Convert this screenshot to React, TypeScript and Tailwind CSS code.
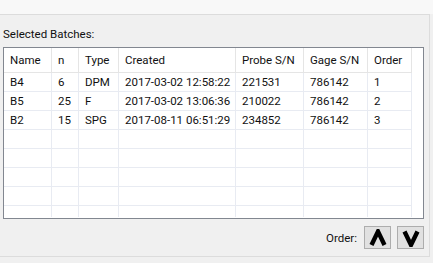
const columns = [
  { key: "name", label: "Name", width: "w-[48px]" },
  { key: "n", label: "n", width: "w-[27px]" },
  { key: "type", label: "Type", width: "w-[40px]" },
  { key: "created", label: "Created", width: "w-[117px]" },
  { key: "probe", label: "Probe S/N", width: "w-[68px]" },
  { key: "gage", label: "Gage S/N", width: "w-[64px]" },
  { key: "order", label: "Order", width: "w-[44px]" },
];

const batches: Record<string, string>[] = [
  { name: "B4", n: "6", type: "DPM", created: "2017-03-02 12:58:22", probe: "221531", gage: "786142", order: "1" },
  { name: "B5", n: "25", type: "F", created: "2017-03-02 13:06:36", probe: "210022", gage: "786142", order: "2" },
  { name: "B2", n: "15", type: "SPG", created: "2017-08-11 06:51:29", probe: "234852", gage: "786142", order: "3" },
];

const emptyRows = 4;

const Chevron = ({ down }: { down?: boolean }) => (
  <svg width="18" height="18" viewBox="0 0 18 18" className="block">
    <path
      d={down ? "M2.5 2.5 L9 16 L15.5 2.5" : "M2.5 16 L9 2.5 L15.5 16"}
      fill="none"
      stroke="#000"
      strokeWidth="4.4"
      strokeLinejoin="miter"
    />
  </svg>
);

export default function App() {
  return (
    <div className="w-[433px] h-[263px] bg-[#f0f0f0] overflow-hidden font-['Roboto',sans-serif] text-[11.5px] text-[#111] whitespace-nowrap">
      <div className="h-[14px] bg-[#f8f8f8]" />
      <div className="w-[430px] h-[243px] border-t border-r border-b border-[#dcdcdc] pl-[3px]">
        <div className="pt-[11px] leading-[16px]">Selected Batches:</div>

        <div className="mt-[5px] w-[421px] h-[172px] border border-[#828790] bg-white">
          {/* header */}
          <div className="flex h-[25px]">
            {columns.map((c) => (
              <div
                key={c.key}
                className={`${c.width} shrink-0 border-r border-b border-[#e5e5e5] pl-[6px] leading-[24px]`}
              >
                {c.label}
              </div>
            ))}
          </div>

          {batches.map((b) => (
            <div key={b.name} className="flex h-[19px]">
              {columns.map((c) => (
                <div
                  key={c.key}
                  className={`${c.width} shrink-0 border-r border-b border-[#e8ebf2] pl-[6px] leading-[18px] overflow-hidden`}
                >
                  {b[c.key]}
                </div>
              ))}
            </div>
          ))}

          {Array.from({ length: emptyRows }).map((_, i) => (
            <div key={i} className="flex h-[19px]">
              {columns.map((c) => (
                <div key={c.key} className={`${c.width} shrink-0 border-r border-b border-[#e8ebf2]`} />
              ))}
            </div>
          ))}

          <div className="flex h-[11px]">
            {columns.map((c) => (
              <div key={c.key} className={`${c.width} shrink-0 border-r border-[#e8ebf2]`} />
            ))}
          </div>
        </div>

        <div className="mt-[7px] w-[421px] flex items-center justify-end">
          <span className="mr-[7px] leading-[16px]">Order:</span>
          <button className="w-[27px] h-[23px] bg-[#e1e1e1] border border-[#adadad] flex items-center justify-center">
            <Chevron />
          </button>
          <button className="ml-[6px] w-[27px] h-[23px] bg-[#e1e1e1] border border-[#adadad] flex items-center justify-center">
            <Chevron down />
          </button>
        </div>
      </div>
    </div>
  );
}
